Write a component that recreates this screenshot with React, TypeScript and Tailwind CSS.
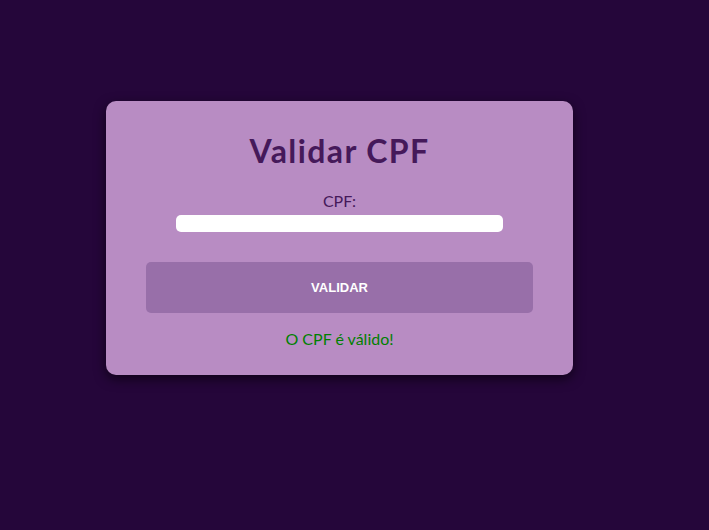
import { useState } from "react";

export default function App() {
  const [cpf, setCpf] = useState("");

  return (
    <div className="min-h-[530px] w-full bg-[#25063a] pt-[101px] font-['Lato',sans-serif]">
      <div className="ml-[106px] flex w-[467px] flex-col items-center rounded-[10px] bg-[#b88cc3] px-10 pb-[26px] pt-[30px] shadow-[0_4px_12px_rgba(0,0,0,0.6)]">
        <h1 className="text-[32px] leading-[40px] font-bold tracking-[1.4px] text-[#45195a]">Validar CPF</h1>
        <label htmlFor="cpf" className="mt-[20px] text-[16px] leading-[20px] text-[#45195a]">
          CPF:
        </label>
        <input
          id="cpf"
          value={cpf}
          onChange={(e) => setCpf(e.target.value)}
          className="mt-[4px] h-[17px] w-[327px] rounded-[5px] bg-white px-2 text-[12px] outline-none"
        />
        <button className="mt-[30px] h-[51px] w-full rounded-[5px] bg-[#986fa9] font-['Liberation_Sans',sans-serif] text-[13px] font-bold text-white">
          VALIDAR
        </button>
        <p className="mt-[16px] text-[16px] leading-[20px] text-[#008000]">O CPF é válido!</p>
      </div>
    </div>
  );
}
